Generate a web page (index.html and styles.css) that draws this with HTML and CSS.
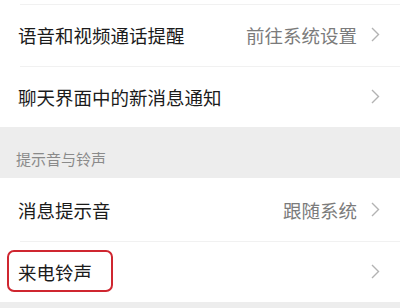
FILE: index.html
```html
<!DOCTYPE html>
<html lang="zh">
<head>
<meta charset="utf-8">
<link rel="stylesheet" href="styles.css">
</head>
<body>
<div class="page">
  <div class="stub"></div>
  <div class="group">
    <div class="row">
      <span class="label">语音和视频通话提醒</span>
      <span class="value">前往系统设置</span>
      <svg class="chev" viewBox="0 0 9 15"><polyline points="1,1 7.5,7.5 1,14"/></svg>
    </div>
    <div class="row">
      <span class="label">聊天界面中的新消息通知</span>
      <svg class="chev" viewBox="0 0 9 15"><polyline points="1,1 7.5,7.5 1,14"/></svg>
    </div>
  </div>
  <div class="section">提示音与铃声</div>
  <div class="group">
    <div class="row first">
      <span class="label">消息提示音</span>
      <span class="value">跟随系统</span>
      <svg class="chev" viewBox="0 0 9 15"><polyline points="1,1 7.5,7.5 1,14"/></svg>
    </div>
    <div class="row last">
      <span class="label">来电铃声</span>
      <svg class="chev" viewBox="0 0 9 15"><polyline points="1,1 7.5,7.5 1,14"/></svg>
      <div class="highlight"></div>
    </div>
  </div>
  <div class="footer"></div>
</div>
</body>
</html>
```
FILE: styles.css
```css
html, body {
  margin: 0;
  padding: 0;
  background: #ffffff;
}
.page {
  width: 400px;
  height: 308px;
  overflow: hidden;
  font-family: "Noto Sans CJK SC", "Noto Sans", sans-serif;
  display: flex;
  flex-direction: column;
}
.stub {
  height: 3px;
  background: #ffffff;
}
.group {
  background: #ffffff;
}
.row {
  position: relative;
  display: flex;
  align-items: center;
  height: 62px;
  padding: 0 20px 0 18px;
  box-sizing: border-box;
  border-top: 1px solid transparent;
  background-image: linear-gradient(#f1f1f1, #f1f1f1);
  background-size: calc(100% - 20px) 1px;
  background-position: 20px 0;
  background-repeat: no-repeat;
}
.row.first {
  background-image: none;
  height: 62px;
}
.row.last {
  height: 62px;
}
.label {
  flex: 1;
  font-size: 18.5px;
  color: #1b1b1b;
  white-space: nowrap;
}
.value {
  font-size: 18.5px;
  color: #7b7b7b;
  margin-right: 14px;
  white-space: nowrap;
}
.chev {
  width: 9px;
  height: 15px;
  fill: none;
  stroke: #b3b3b3;
  stroke-width: 1.4;
}
.section {
  height: 51px;
  background: #ededed;
  box-sizing: border-box;
  padding: 22px 0 0 16px;
  font-size: 15px;
  line-height: 20px;
  color: #8a8a8a;
}
.highlight {
  position: absolute;
  left: 7px;
  top: 9px;
  width: 106px;
  height: 42px;
  box-sizing: border-box;
  border: 2px solid #cf2630;
  border-radius: 7px;
}
.footer {
  flex: 1;
  background: #ededed;
}
```
